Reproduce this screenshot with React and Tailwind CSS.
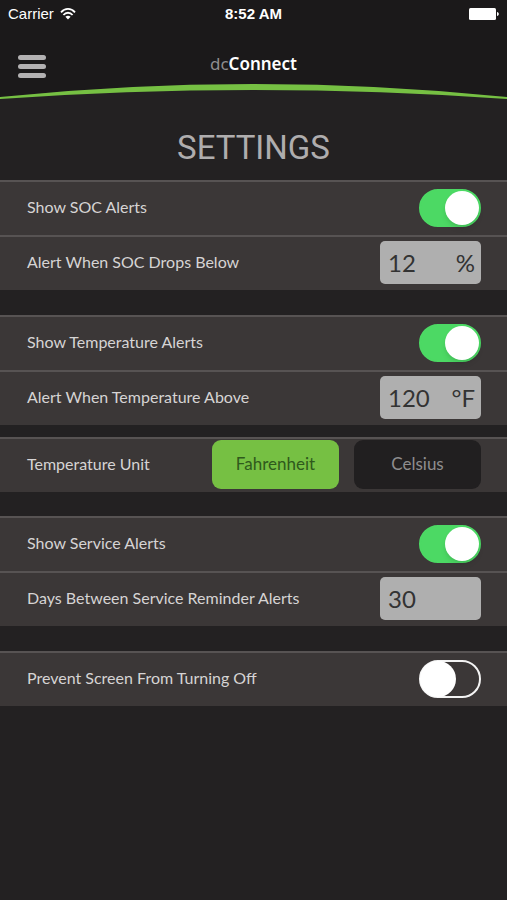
import { useState } from 'react';
import clsx from 'clsx';

const LABEL = "font-['Lato','Open_Sans',sans-serif]";

function StatusBar() {
  return (
    <div className="grid h-7 grid-cols-3 items-center px-2 font-['Liberation_Sans',Arial,sans-serif] text-[15px] text-white">
      <div className="flex items-center gap-1.5">
        <span>Carrier</span>
        <svg width="16" height="12" viewBox="0 0 16 12" fill="none" stroke="white" strokeWidth="1.8" aria-label="Wi-Fi">
          <path d="M1 4.4C5-.2 11-.2 15 4.4" />
          <path d="M3.4 7C6 4 10 4 12.6 7" />
          <path d="M8 11.4 5.4 8.7C6.8 7.3 9.2 7.3 10.6 8.7Z" fill="white" stroke="none" />
        </svg>
      </div>
      <span className="text-center font-bold">8:52 AM</span>
      <svg className="justify-self-end" width="30" height="12" viewBox="0 0 30 12" fill="white" aria-label="Battery">
        <rect width="27" height="12" rx="1.5" />
        <path d="M28 4c2.4.4 2.4 3.6 0 4Z" />
      </svg>
    </div>
  );
}

function Header() {
  return (
    <header>
      <div className="bg-[#1b191a]">
        <StatusBar />
        <div className="grid h-14 grid-cols-3 items-center px-4 pt-4">
          <button type="button" aria-label="Menu" className="flex w-8 flex-col gap-1 px-0.5 pt-1">
            <span className="h-[5px] rounded-full bg-[#b3b1b2]" />
            <span className="h-[5px] rounded-full bg-[#b3b1b2]" />
            <span className="h-[5px] rounded-full bg-[#b3b1b2]" />
          </button>
          <div className="text-center font-['Noto_Sans','Open_Sans',sans-serif] text-[17px] text-[#8f8d8e]">
            dc<span className="font-semibold text-white">Connect</span>
          </div>
        </div>
      </div>
      {/* green arc closing the header */}
      <svg className="block h-4 w-full" viewBox="0 0 507 16" preserveAspectRatio="none" aria-hidden="true">
        <path d="M0 0H507V13Q253-13 0 13Z" fill="#1b191a" />
        <path d="M0 13Q253-13 507 13V15Q253-3 0 15Z" fill="#76c043" />
      </svg>
    </header>
  );
}

function Group({ children }) {
  return <div className="bg-[#3b3737]">{children}</div>;
}

function Row({ label, htmlFor, labelId, children }) {
  const Tag = htmlFor ? 'label' : 'span';
  return (
    <div className="flex h-[55px] items-center justify-between border-t-2 border-[#575353] pr-[26px] pb-0.5 pl-[27px]">
      <Tag id={labelId} htmlFor={htmlFor} className={clsx(LABEL, 'pb-0.5 text-base text-[#d6d4d4]')}>
        {label}
      </Tag>
      {children}
    </div>
  );
}

function Toggle({ id, checked, onChange }) {
  return (
    <input
      id={id}
      type="checkbox"
      role="switch"
      checked={checked}
      onChange={(e) => onChange(e.target.checked)}
      className="flex h-[38px] w-[62px] appearance-none items-center rounded-full border-2 border-[#f4f4f4] before:size-[34px] before:rounded-full before:bg-white before:ring-1 before:ring-white checked:justify-end checked:border-[#4cd964] checked:bg-[#4cd964] checked:before:shadow-md checked:before:ring-0"
    />
  );
}

function ValueField({ id, value, unit, onChange }) {
  return (
    <div className={clsx(LABEL, 'flex h-[43px] w-[101px] items-center rounded-[5px] bg-[#afafaf] pr-1.5 pl-2 text-2xl text-[#333]')}>
      <input
        id={id}
        type="text"
        inputMode="numeric"
        value={value}
        onChange={(e) => onChange(e.target.value)}
        className="w-0 flex-1 outline-none"
      />
      {unit && <span>{unit}</span>}
    </div>
  );
}

function UnitButton({ active, onClick, children }) {
  return (
    <button
      type="button"
      aria-pressed={active}
      onClick={onClick}
      className={clsx(
        LABEL,
        'h-[49px] w-[127px] rounded-[9px] pb-0.5 text-[17px]',
        active ? 'bg-[#76c043] text-[#2f5a1c]' : 'bg-[#211f20] text-[#8f8d8e]'
      )}
    >
      {children}
    </button>
  );
}

export default function App() {
  const [socAlerts, setSocAlerts] = useState(true);
  const [socLimit, setSocLimit] = useState('12');
  const [tempAlerts, setTempAlerts] = useState(true);
  const [tempLimit, setTempLimit] = useState('120');
  const [unit, setUnit] = useState('F');
  const [serviceAlerts, setServiceAlerts] = useState(true);
  const [serviceDays, setServiceDays] = useState('30');
  const [keepAwake, setKeepAwake] = useState(false);

  return (
    <div className="min-h-screen bg-[#232122]">
      <Header />

      <main>
        <h1 className="flex h-20 items-center justify-center pt-4 font-[Roboto,sans-serif] text-[33px] text-[#afadae]">
          SETTINGS
        </h1>

        <Group>
          <Row label="Show SOC Alerts" htmlFor="soc-alerts">
            <Toggle id="soc-alerts" checked={socAlerts} onChange={setSocAlerts} />
          </Row>
          <Row label="Alert When SOC Drops Below" htmlFor="soc-limit">
            <ValueField id="soc-limit" value={socLimit} unit="%" onChange={setSocLimit} />
          </Row>
        </Group>

        <div className="mt-[25px]">
          <Group>
            <Row label="Show Temperature Alerts" htmlFor="temp-alerts">
              <Toggle id="temp-alerts" checked={tempAlerts} onChange={setTempAlerts} />
            </Row>
            <Row label="Alert When Temperature Above" htmlFor="temp-limit">
              <ValueField id="temp-limit" value={tempLimit} unit={`°${unit}`} onChange={setTempLimit} />
            </Row>
          </Group>
        </div>

        <div className="mt-3">
          <Group>
            <Row label="Temperature Unit" labelId="temp-unit">
              <div role="group" aria-labelledby="temp-unit" className="flex gap-[15px]">
                <UnitButton active={unit === 'F'} onClick={() => setUnit('F')}>Fahrenheit</UnitButton>
                <UnitButton active={unit === 'C'} onClick={() => setUnit('C')}>Celsius</UnitButton>
              </div>
            </Row>
          </Group>
        </div>

        <div className="mt-6">
          <Group>
            <Row label="Show Service Alerts" htmlFor="service-alerts">
              <Toggle id="service-alerts" checked={serviceAlerts} onChange={setServiceAlerts} />
            </Row>
            <Row label="Days Between Service Reminder Alerts" htmlFor="service-days">
              <ValueField id="service-days" value={serviceDays} onChange={setServiceDays} />
            </Row>
          </Group>
        </div>

        <div className="mt-[25px]">
          <Group>
            <Row label="Prevent Screen From Turning Off" htmlFor="keep-awake">
              <Toggle id="keep-awake" checked={keepAwake} onChange={setKeepAwake} />
            </Row>
          </Group>
        </div>
      </main>
    </div>
  );
}
